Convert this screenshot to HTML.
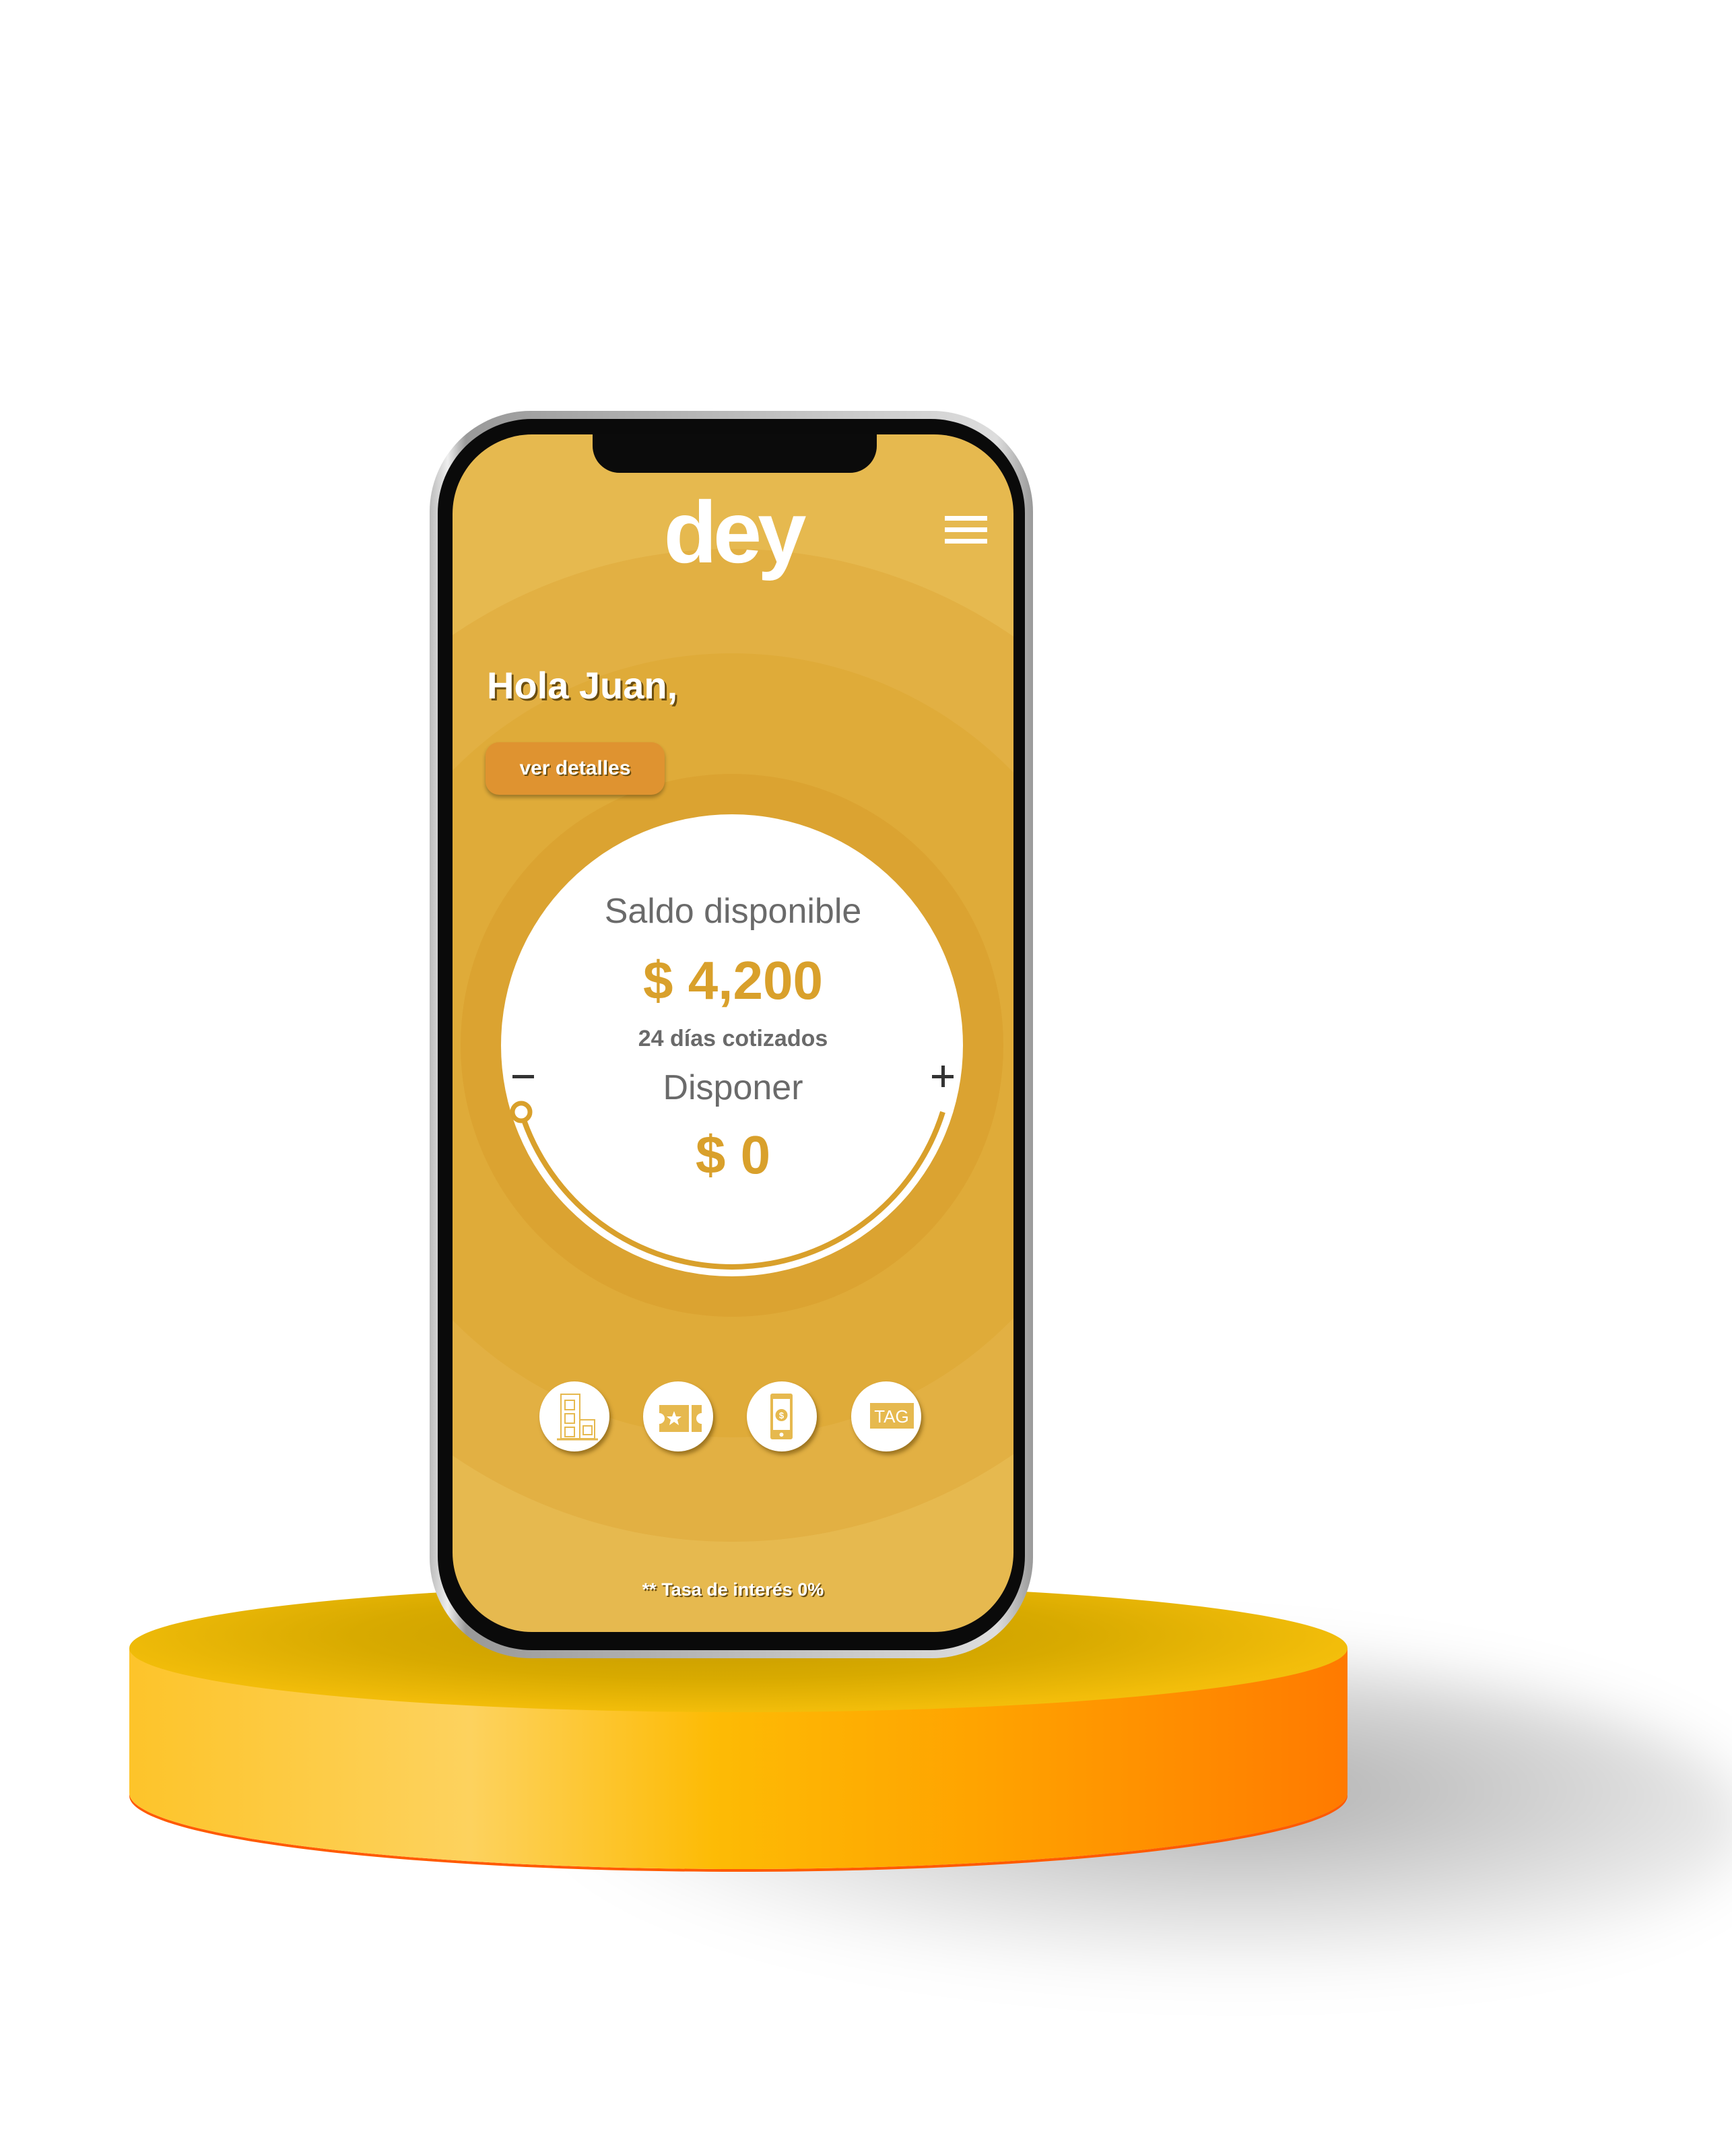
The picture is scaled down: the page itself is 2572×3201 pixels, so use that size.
<!DOCTYPE html>
<html><head><meta charset="utf-8"><style>
*{margin:0;padding:0;box-sizing:border-box}
body{width:2572px;height:3201px;background:#fff;position:relative;overflow:hidden;font-family:"Liberation Sans",sans-serif}
.abs{position:absolute}
</style></head><body>
<!-- shadow -->
<div class="abs" style="left:700px;top:2450px;width:1900px;height:520px;border-radius:50%;background:radial-gradient(ellipse at 60% 40%,rgba(0,0,0,.32),rgba(0,0,0,0) 65%);filter:blur(40px)"></div>
<!-- pedestal -->
<div class="abs" style="left:192px;top:2549px;width:1809px;height:226px;border-radius:50%;background:linear-gradient(90deg,#fdc42a 0%,#fdd25e 28%,#fdbb05 48%,#ffa300 70%,#ff7a00 100%);box-shadow:0 4px 0 #ff5a00"></div>
<div class="abs" style="left:192px;top:2447px;width:1809px;height:215px;background:linear-gradient(90deg,#fdc42a 0%,#fdd25e 28%,#fdbb05 48%,#ffa300 70%,#ff7a00 100%)"></div>
<div class="abs" style="left:192px;top:2352px;width:1809px;height:190px;border-radius:50%;background:radial-gradient(ellipse at 48% 40%,#c49a00 0%,#d8aa00 40%,#f2bd0a 70%,#fdc41a 100%)"></div>
<!-- phone -->
<div class="abs" style="left:638px;top:610px;width:896px;height:1852px;border-radius:150px;background:linear-gradient(90deg,#bbb,#eee 3%,#999 6%,#ddd 94%,#999 100%)"></div>
<div class="abs" style="left:650px;top:622px;width:872px;height:1828px;border-radius:140px;background:#0a0a0a"></div>
<div class="abs" style="left:672px;top:645px;width:833px;height:1778px;border-radius:118px;overflow:hidden;background:#e6b94f">
  <div class="abs" style="left:-322px;top:170px;width:1474px;height:1474px;border-radius:50%;background:#e2b043"></div>
  <div class="abs" style="left:-167px;top:325px;width:1164px;height:1164px;border-radius:50%;background:#dfab39"></div>
  <div class="abs" style="left:12px;top:504px;width:806px;height:806px;border-radius:50%;background:#dba331"></div>
  <div class="abs" style="left:72px;top:564px;width:686px;height:686px;border-radius:50%;background:#fff"></div>
  <div class="abs" style="left:208px;top:-5px;width:422px;height:62px;background:#0b0b0b;border-radius:0 0 40px 40px"></div>
  <div class="abs" style="left:0;top:80px;width:833px;text-align:center;color:#fff;font-weight:bold;font-size:130px;line-height:130px;letter-spacing:-6px">dey</div>
  <div class="abs" style="left:731px;top:121px;width:63px;height:7px;background:#fff;box-shadow:0 17px 0 #fff,0 34px 0 #fff"></div>
  <div class="abs" style="left:51px;top:340px;color:#fff;font-weight:bold;font-size:56px;text-shadow:3px 3px 0 #6b4e10">Hola Juan,</div>
  <div class="abs" style="left:49px;top:457px;width:266px;height:78px;border-radius:20px;background:#df9330;box-shadow:0 4px 6px rgba(0,0,0,.3);color:#fff;font-weight:bold;font-size:30px;text-align:center;line-height:78px;text-shadow:2px 2px 0 #6b4e10">ver detalles</div>
  <div class="abs" style="left:0;top:678px;width:833px;text-align:center;color:#6a6a6a;font-size:52px">Saldo disponible</div>
  <div class="abs" style="left:0;top:765px;width:833px;text-align:center;color:#d9a02b;font-size:80px;font-weight:bold">$ 4,200</div>
  <div class="abs" style="left:0;top:878px;width:833px;text-align:center;color:#6a6a6a;font-size:34px;font-weight:bold">24 días cotizados</div>
  <div class="abs" style="left:0;top:940px;width:833px;text-align:center;color:#6a6a6a;font-size:52px">Disponer</div>
  <div class="abs" style="left:0;top:1024px;width:833px;text-align:center;color:#d9a02b;font-size:80px;font-weight:bold">$ 0</div>
  <div class="abs" style="left:89px;top:951px;width:32px;height:5px;background:#333"></div>
  <div class="abs" style="left:712px;top:951px;width:32px;height:5px;background:#333"></div>
  <div class="abs" style="left:725.5px;top:937px;width:5px;height:32px;background:#333"></div>
  <svg class="abs" style="left:0;top:0" width="833" height="1778">
    <path d="M102 1006 A328 328 0 0 0 728 1006" fill="none" stroke="#d9a02b" stroke-width="8"/>
    <circle cx="102" cy="1006" r="13" fill="#fff" stroke="#d9a02b" stroke-width="7"/>
  </svg>
  <div class="abs" style="left:129px;top:1406px;width:104px;height:104px;border-radius:50%;background:#fff;box-shadow:3px 5px 6px rgba(90,60,0,.5)"></div>
  <div class="abs" style="left:283px;top:1406px;width:104px;height:104px;border-radius:50%;background:#fff;box-shadow:3px 5px 6px rgba(90,60,0,.5)"></div>
  <div class="abs" style="left:437px;top:1406px;width:104px;height:104px;border-radius:50%;background:#fff;box-shadow:3px 5px 6px rgba(90,60,0,.5)"></div>
  <div class="abs" style="left:592px;top:1406px;width:104px;height:104px;border-radius:50%;background:#fff;box-shadow:3px 5px 6px rgba(90,60,0,.5)"></div>
  <svg class="abs" style="left:0;top:0" width="833" height="1778" fill="none" stroke="#e6b94f" stroke-width="2">
    <rect x="161" y="1425" width="28" height="66"/><rect x="189" y="1463" width="22" height="28"/><line x1="155" y1="1492" x2="216" y2="1492" stroke-width="3"/>
    <rect x="167" y="1434" width="14" height="14"/><rect x="167" y="1454" width="14" height="14"/><rect x="167" y="1474" width="14" height="14"/><rect x="194" y="1472" width="13" height="13"/>
    <path d="M307 1441h44v40h-44v-12a7 7 0 0 0 0-16z" fill="#e6b94f" stroke="none"/><path d="M355 1441h15v12a7 7 0 0 0 0 16v12h-15z" fill="#e6b94f" stroke="none"/>
    <polygon points="329,1450 332,1458 340,1458 334,1463 336,1471 329,1466 322,1471 324,1463 318,1458 326,1458" fill="#fff" stroke="none"/>
    <rect x="472" y="1424" width="33" height="68" rx="3" fill="#e6b94f" stroke="none"/><rect x="476" y="1432" width="25" height="46" fill="#fff" stroke="none"/>
    <circle cx="488.5" cy="1456" r="9" fill="#e6b94f" stroke="none"/><circle cx="488.5" cy="1485" r="3" fill="#fff" stroke="none"/>
    <text x="488.5" y="1461" fill="#fff" stroke="none" font-size="13" font-weight="bold" text-anchor="middle">$</text>
    <path d="M620 1438h65v38h-65v-34z" fill="#e6b94f" stroke="none"/>
    <text x="652" y="1467" fill="#fff" stroke="none" font-size="26" text-anchor="middle" font-family="Liberation Sans">TAG</text>
  </svg>
  <div class="abs" style="left:0;top:1700px;width:833px;text-align:center;color:#fff;font-weight:bold;font-size:27px;text-shadow:2px 2px 0 #6b4e10">** Tasa de interés 0%</div>
</div>
</body></html>
